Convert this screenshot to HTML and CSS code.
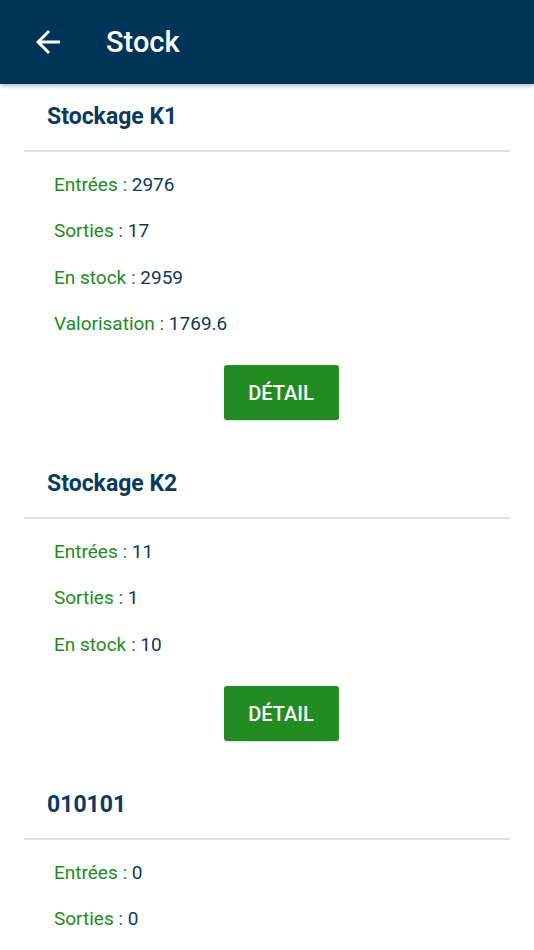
FILE: index.html
```html
<!DOCTYPE html>
<html lang="fr">
<head>
<meta charset="utf-8">
<title>Stock</title>
<link rel="stylesheet" href="styles.css">
</head>
<body>
<header class="appbar">
  <svg class="back" viewBox="0 0 24 24" width="36" height="36" aria-hidden="true"><path d="M20 11H7.83l5.59-5.59L12 4l-8 8 8 8 1.41-1.41L7.83 13H20v-2z" fill="#fff"/></svg>
  <h1 class="appbar-title">Stock</h1>
</header>
<main class="list">
  <section class="card">
    <h2 class="card-title">Stockage K1</h2>
    <div class="rows">
      <p class="row"><span class="label">Entrées : </span><span class="value">2976</span></p>
      <p class="row"><span class="label">Sorties : </span><span class="value">17</span></p>
      <p class="row"><span class="label">En stock : </span><span class="value">2959</span></p>
      <p class="row"><span class="label">Valorisation : </span><span class="value">1769.6</span></p>
      <div class="actions"><button class="btn">DÉTAIL</button></div>
    </div>
  </section>
  <section class="card">
    <h2 class="card-title">Stockage K2</h2>
    <div class="rows">
      <p class="row"><span class="label">Entrées : </span><span class="value">11</span></p>
      <p class="row"><span class="label">Sorties : </span><span class="value">1</span></p>
      <p class="row"><span class="label">En stock : </span><span class="value">10</span></p>
      <div class="actions"><button class="btn">DÉTAIL</button></div>
    </div>
  </section>
  <section class="card">
    <h2 class="card-title">010101</h2>
    <div class="rows">
      <p class="row"><span class="label">Entrées : </span><span class="value">0</span></p>
      <p class="row"><span class="label">Sorties : </span><span class="value">0</span></p>
    </div>
  </section>
</main>
</body>
</html>
```

FILE: styles.css
```css
html, body {
  margin: 0;
  padding: 0;
  overflow: hidden;
  background: #ffffff;
  font-family: Roboto, "Noto Sans", "Liberation Sans", sans-serif;
}

.appbar {
  position: relative;
  z-index: 2;
  height: 84px;
  background: #003459;
  display: flex;
  align-items: center;
  box-shadow: 0 2px 4px rgba(0, 0, 0, 0.28);
}

.back {
  margin-left: 30px;
  flex: none;
}

.appbar-title {
  margin: 0 0 0 40px;
  color: #ffffff;
  font-size: 29px;
  font-weight: 500;
  line-height: 36px;
}

.list {
  padding: 0 24px;
}

.card {
  padding-bottom: 31px;
}

.card-title {
  margin: 0;
  padding: 18px 0 18px 23px;
  font-size: 23px;
  line-height: 30px;
  font-weight: 700;
  color: #0b3a5e;
  border-bottom: 2px solid #e0e0e0;
}

.rows {
  padding: 10px 0 0 30px;
}

.row {
  margin: 0;
  font-size: 19px;
  line-height: 46.3px;
}

.label {
  color: #228b22;
}

.value {
  color: #0d3a5c;
}

.actions {
  display: flex;
  justify-content: center;
  margin-top: 18px;
  margin-left: -2px;
}

.btn {
  width: 115px;
  height: 55px;
  border: none;
  border-radius: 3px;
  background: #228b22;
  color: #ffffff;
  font-family: Roboto, "Noto Sans", "Liberation Sans", sans-serif;
  font-size: 20px;
  font-weight: 500;
  padding: 0;
  box-shadow: 0 1px 2px rgba(0, 0, 0, 0.15);
}
```
